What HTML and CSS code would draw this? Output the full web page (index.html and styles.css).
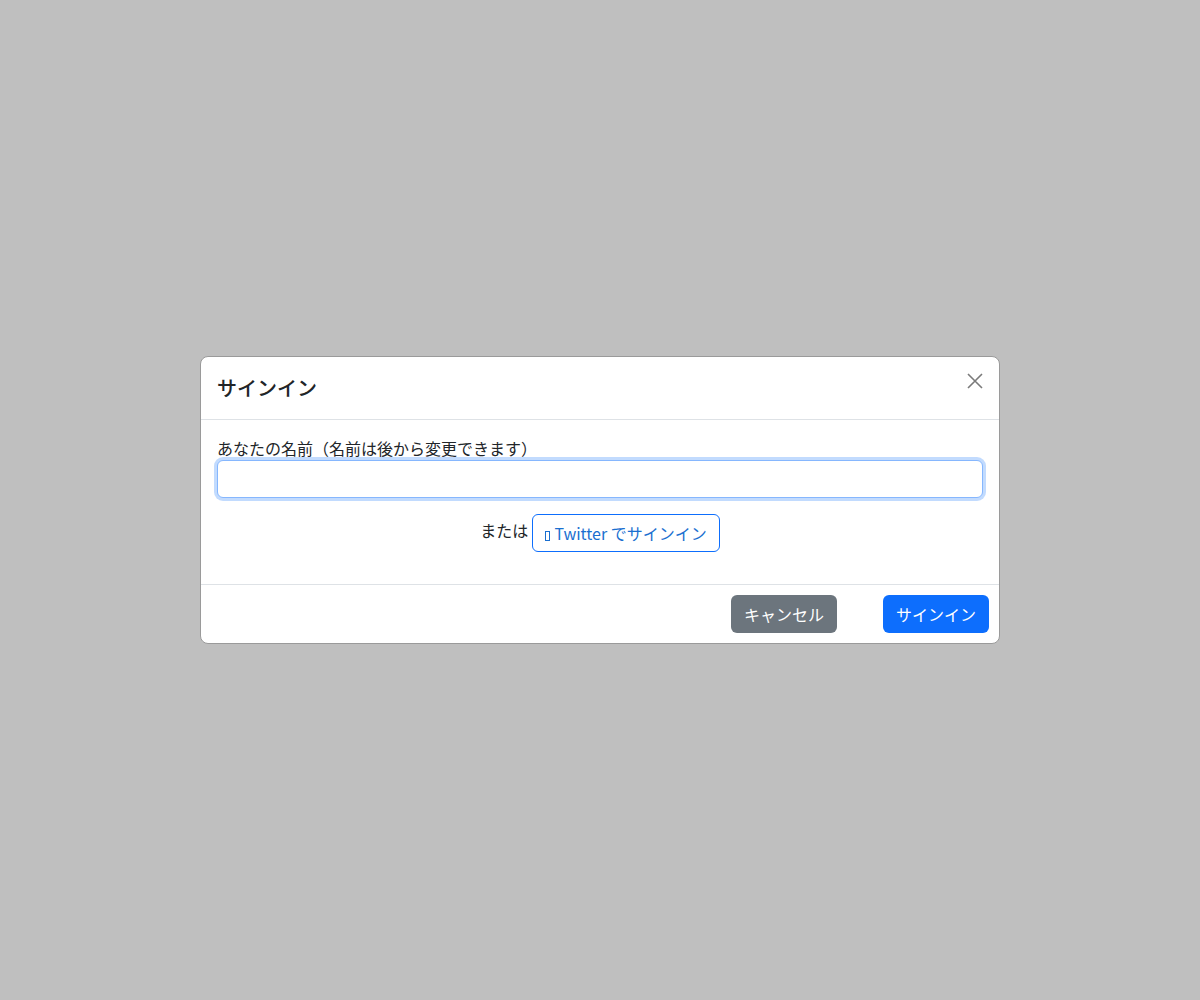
FILE: index.html
```html
<!DOCTYPE html>
<html lang="ja">
<head>
<meta charset="utf-8">
<title>サインイン</title>
<link rel="stylesheet" href="styles.css">
</head>
<body>
<div class="backdrop">
  <div class="modal">
    <div class="modal-header">
      <h5 class="modal-title">サインイン</h5>
      <button class="btn-close" aria-label="閉じる">
        <svg width="16" height="16" viewBox="0 0 16 16"><path d="M1 1L15 15M15 1L1 15" stroke="currentColor" stroke-width="1.6" fill="none"/></svg>
      </button>
    </div>
    <div class="modal-body">
      <label class="form-label" for="name">あなたの名前（名前は後から変更できます）</label>
      <input class="form-control" id="name" type="text">
      <p class="alt-row">または <button class="btn btn-outline"><span class="tofu"></span> Twitter でサインイン</button></p>
    </div>
    <div class="modal-footer">
      <button class="btn btn-secondary">キャンセル</button>
      <button class="btn btn-primary">サインイン</button>
    </div>
  </div>
</div>
</body>
</html>
```
FILE: styles.css
```css
* { box-sizing: border-box; }
html, body { margin: 0; padding: 0; }
body {
  font-family: "Noto Sans CJK JP", "Noto Sans", sans-serif;
  font-size: 16px;
  line-height: 1.5;
  color: #212529;
  background: #bfbfbf;
}
.backdrop {
  height: 1000px;
  display: flex;
  align-items: flex-start;
  justify-content: center;
  padding-top: 356px;
}
.modal {
  width: 800px;
  background: #fff;
  border: 1px solid #9a9a9a;
  border-radius: 8px;
}
.modal-header {
  display: flex;
  align-items: center;
  justify-content: space-between;
  padding: 16px;
  border-bottom: 1px solid #dee2e6;
}
.modal-title {
  margin: 0;
  font-size: 20px;
  font-weight: 500;
  line-height: 30px;
}
.btn-close {
  border: 0;
  background: transparent;
  color: #7a7a7a;
  padding: 0;
  width: 16px;
  height: 16px;
  margin-top: -14px;
  cursor: pointer;
  display: flex;
}
.modal-body {
  padding: 16px;
}
.form-label {
  display: block;
  line-height: 24px;
}
.form-control {
  display: block;
  width: 100%;
  height: 38px;
  border: 1px solid #86b7fe;
  border-radius: 6px;
  box-shadow: 0 0 0 3px rgba(13, 110, 253, 0.25);
  outline: none;
  font: inherit;
  padding: 6px 12px;
  background: #fff;
}
.alt-row {
  margin: 16px 0 16px;
  text-align: center;
}
.btn {
  font-family: inherit;
  font-size: 16px;
  line-height: 24px;
  padding: 6px 12px;
  border-radius: 6px;
  border: 1px solid transparent;
  cursor: pointer;
  vertical-align: middle;
}
.btn-outline {
  border-color: #0d6efd;
  background: #fff;
  color: #1a6fd0;
}
.tofu {
  display: inline-block;
  width: 5px;
  height: 10px;
  border: 1px solid currentColor;
  vertical-align: -1px;
  margin-right: 1px;
}
.btn-secondary {
  background: #6c757d;
  color: #fff;
  margin-right: 46px;
}
.btn-primary {
  background: #0d6efd;
  color: #fff;
}
.modal-footer {
  display: flex;
  justify-content: flex-end;
  align-items: center;
  padding: 10px 10px 10px;
  border-top: 1px solid #dee2e6;
}
```
